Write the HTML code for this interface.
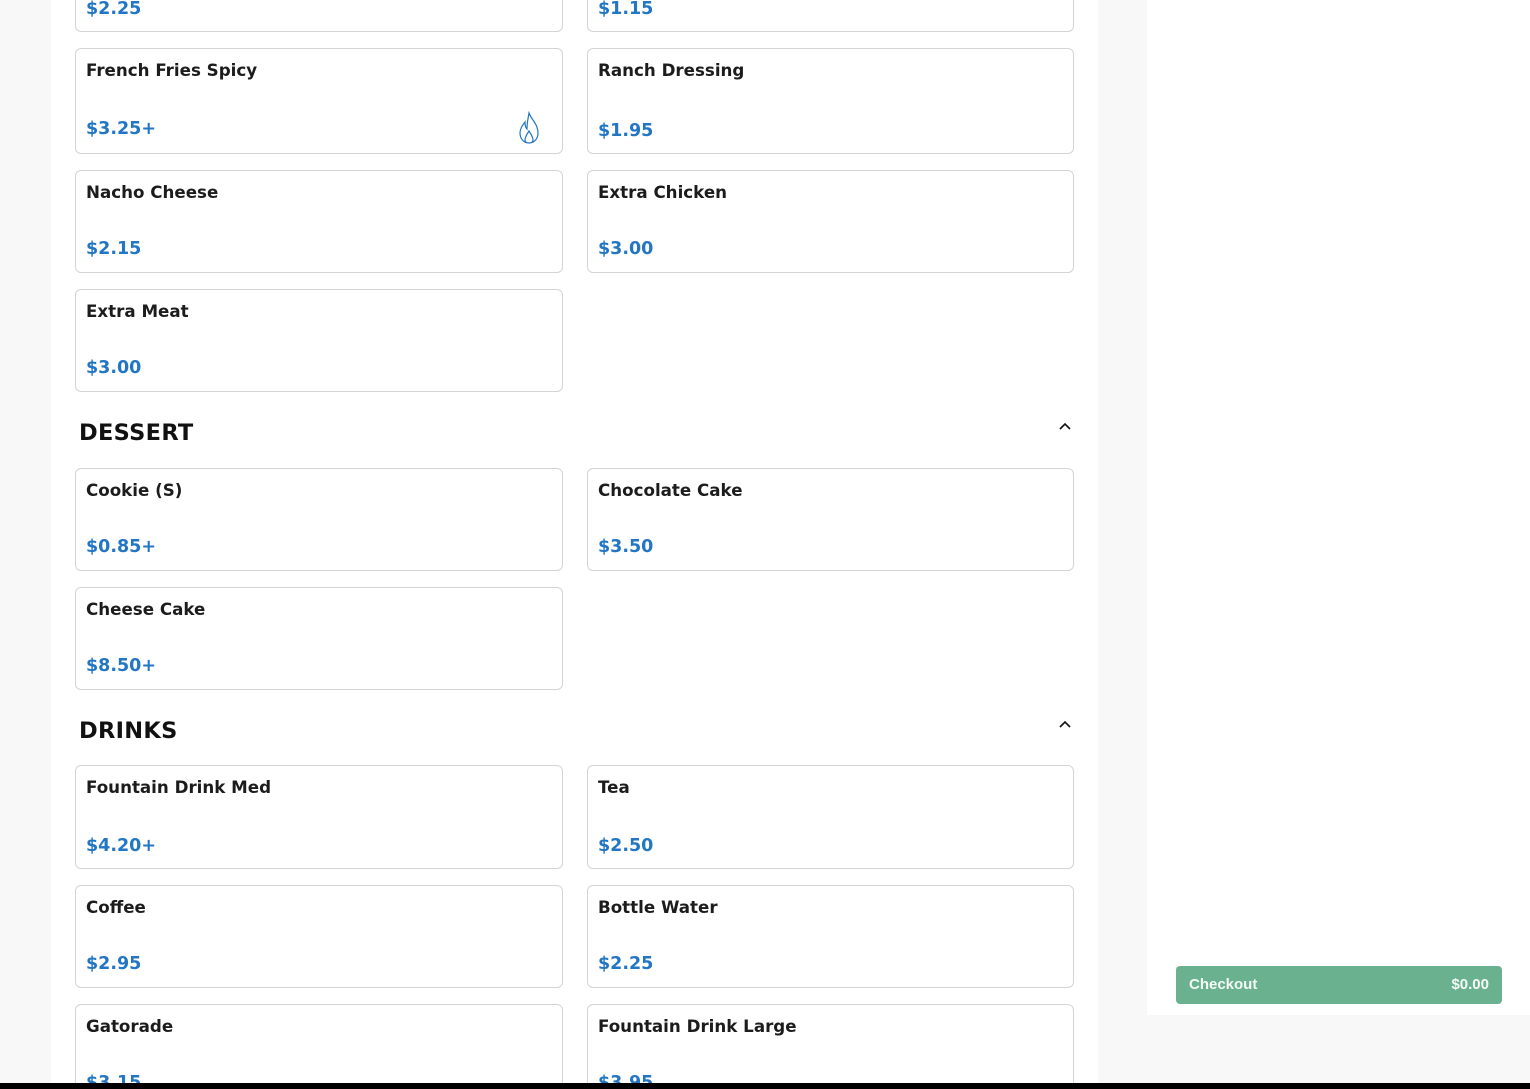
<!DOCTYPE html>
<html><head><meta charset="utf-8"><style>
html,body{margin:0;width:1530px;height:1089px;overflow:hidden}
body{background:#f8f8f8;font-family:"DejaVu Sans","Liberation Sans",sans-serif;position:relative}
.main{position:absolute;left:51px;top:0;width:1047px;height:1089px;background:#fff}
.side{position:absolute;left:1147px;top:0;width:383px;height:1015px;background:#fff}
.card{position:absolute;width:488px;border:1px solid #d4d4d4;border-radius:6px;background:#fff;box-sizing:border-box;height:104px}
.card .t{position:absolute;left:10px;top:11px;font-size:16.7px;font-weight:bold;color:#1c1c1c}
.card .p{position:absolute;left:10px;top:70px;font-size:17.5px;font-weight:bold;color:#2276c4}
.r{width:487px}
.h{position:absolute;left:79px;font-size:22.5px;font-weight:bold;color:#111;letter-spacing:.3px}
.chev{position:absolute;left:1058px;width:14px;height:10px}
.btn{position:absolute;left:1176px;top:966px;width:326px;height:38px;background:#6ab190;border-radius:4px;color:#f4faf6;font-family:"Liberation Sans",sans-serif;font-weight:bold;font-size:15px}
.bar{position:absolute;left:0;top:1083px;width:1530px;height:6px;background:#000}
</style></head><body>
<div class="main"></div><div class="side"></div>

<div class="card" style="left:75px;top:-72px"><div class="p">$2.25</div></div>
<div class="card r" style="left:587px;top:-72px"><div class="p">$1.15</div></div>

<div class="card" style="left:75px;top:48px;height:106px"><div class="t">French Fries Spicy</div><div class="p" style="top:70px">$3.25+</div>
<svg style="position:absolute;left:440px;top:62px" width="26" height="34" viewBox="0 0 26 34"><path d="M13 2C15 8 22 13 22 22C22 28 18 32 13 32C8 32 4 28 4 22C4 17 7 14 9 11C9 15 10 17 11 18C11 12 12 7 13 2Z M13 20C15 23 17 26 17 29C17 31 15 32 13 32C11 32 9 31 9 29C9 26 11 23 13 20Z" fill="none" stroke="#2276c4" stroke-width="1.2"/></svg></div>
<div class="card r" style="left:587px;top:48px;height:106px"><div class="t">Ranch Dressing</div><div class="p" style="top:72px">$1.95</div></div>

<div class="card" style="left:75px;top:170px;height:103px"><div class="t">Nacho Cheese</div><div class="p" style="top:68px">$2.15</div></div>
<div class="card r" style="left:587px;top:170px;height:103px"><div class="t">Extra Chicken</div><div class="p" style="top:68px">$3.00</div></div>
<div class="card" style="left:75px;top:289px;height:103px"><div class="t">Extra Meat</div><div class="p" style="top:68px">$3.00</div></div>

<div class="h" style="top:420px">DESSERT</div>
<svg class="chev" style="top:421px" viewBox="0 0 14 10"><path d="M2 8L7 3L12 8" fill="none" stroke="#111" stroke-width="1.6"/></svg>

<div class="card" style="left:75px;top:468px;height:103px"><div class="t">Cookie (S)</div><div class="p" style="top:68px">$0.85+</div></div>
<div class="card r" style="left:587px;top:468px;height:103px"><div class="t">Chocolate Cake</div><div class="p" style="top:68px">$3.50</div></div>
<div class="card" style="left:75px;top:587px;height:103px"><div class="t">Cheese Cake</div><div class="p" style="top:68px">$8.50+</div></div>

<div class="h" style="top:718px">DRINKS</div>
<svg class="chev" style="top:719px" viewBox="0 0 14 10"><path d="M2 8L7 3L12 8" fill="none" stroke="#111" stroke-width="1.6"/></svg>

<div class="card" style="left:75px;top:765px"><div class="t">Fountain Drink Med</div><div class="p">$4.20+</div></div>
<div class="card r" style="left:587px;top:765px"><div class="t">Tea</div><div class="p">$2.50</div></div>
<div class="card" style="left:75px;top:885px;height:103px"><div class="t">Coffee</div><div class="p" style="top:68px">$2.95</div></div>
<div class="card r" style="left:587px;top:885px;height:103px"><div class="t">Bottle Water</div><div class="p" style="top:68px">$2.25</div></div>
<div class="card" style="left:75px;top:1004px"><div class="t">Gatorade</div><div class="p" style="top:68px">$3.15</div></div>
<div class="card r" style="left:587px;top:1004px"><div class="t">Fountain Drink Large</div><div class="p" style="top:68px">$3.95</div></div>

<div class="btn"><span style="position:absolute;left:13px;top:10px">Checkout</span><span style="position:absolute;right:13px;top:10px">$0.00</span></div>
<div class="bar"></div>
</body></html>
